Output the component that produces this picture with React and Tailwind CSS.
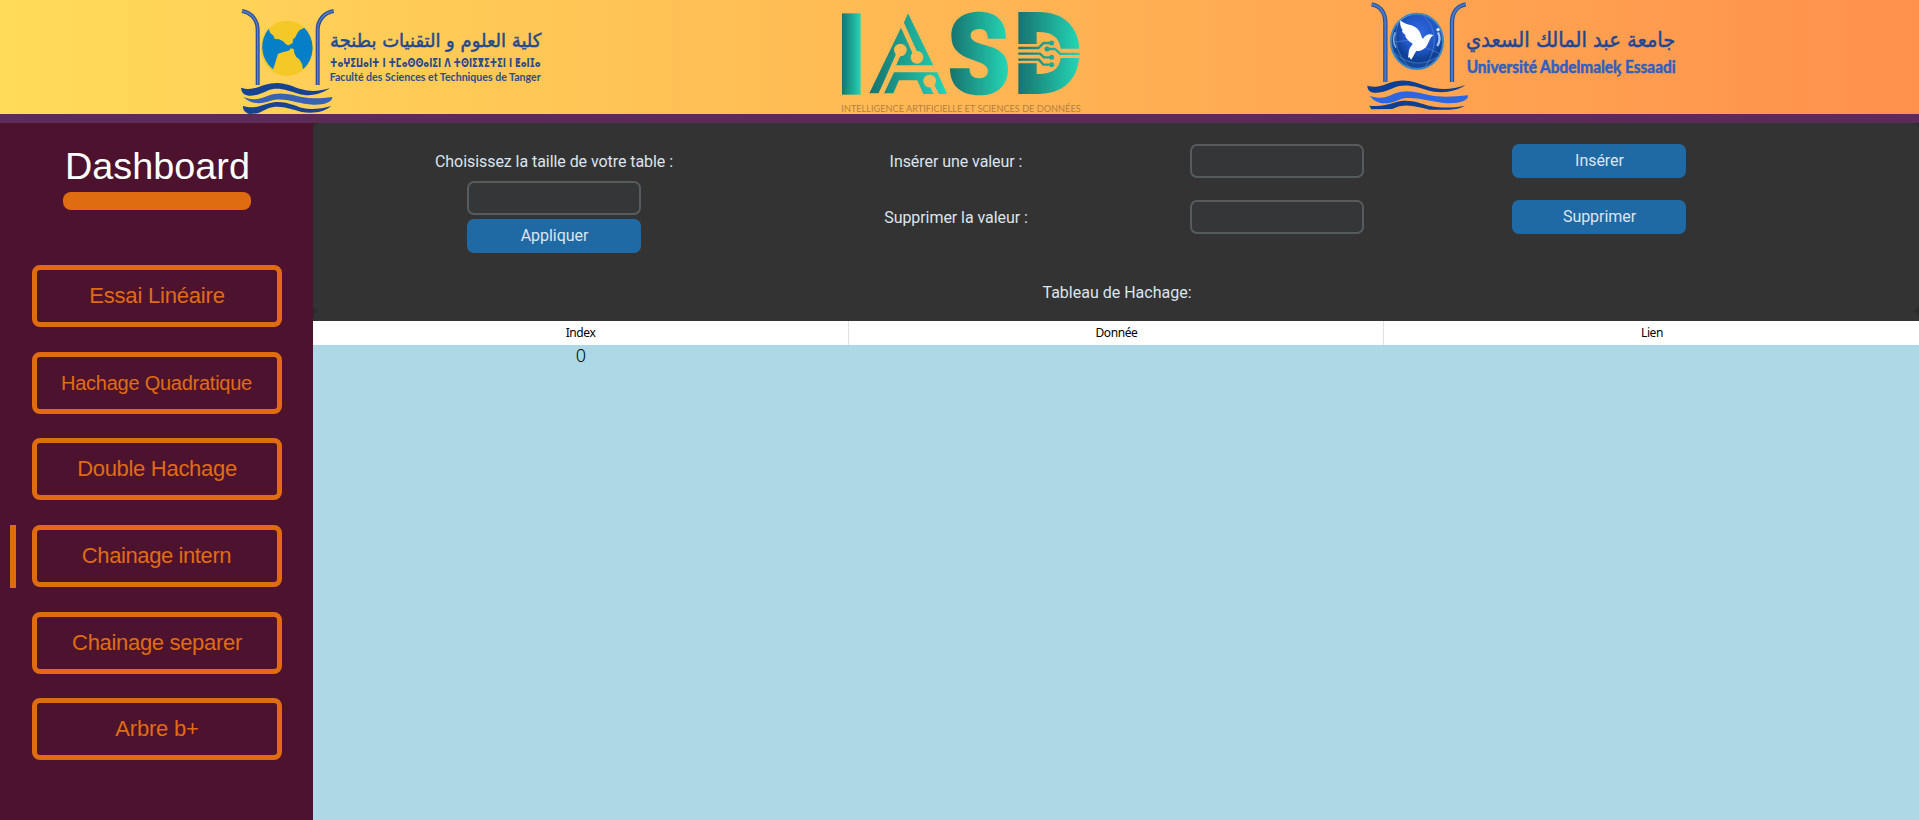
const buttonBase =
  'flex h-[62px] w-[250px] items-center justify-center rounded-[8px] border-[5px] border-[#e06c12] leading-none text-[#e06c12]';

const menu = [
  { label: 'Essai Linéaire', cls: 'text-[22px] tracking-[-0.2px]' },
  { label: 'Hachage Quadratique', cls: 'text-[20px] tracking-[-0.25px] pr-[1px]' },
  { label: 'Double Hachage', cls: 'text-[22px] tracking-[-0.3px]' },
  { label: 'Chainage intern', cls: 'text-[22px] tracking-[-0.4px] pr-[1px]', active: true },
  { label: 'Chainage separer', cls: 'text-[22px] tracking-[-0.32px]' },
  { label: 'Arbre b+', cls: 'text-[22px] tracking-[-0.2px]' },
];

function FacultyLogo() {
  return (
    <svg viewBox="0 0 990 342" className="h-[114px] w-[330px] shrink-0 overflow-visible">
      <g fill="none" stroke="#28509c" strokeWidth="12">
        <path d="M36 33 C66 38 83 62 83 90 V255" />
        <path d="M311 33 C281 38 263 62 263 90 V255" />
      </g>
      <g fill="none" stroke="#5b7fc4" strokeWidth="4">
        <path d="M36 33 C66 38 83 62 83 90 V255" />
        <path d="M311 33 C281 38 263 62 263 90 V255" />
      </g>
      <ellipse cx="171" cy="145" rx="78" ry="83" fill="#f3c827" />
      <path d="M116 86 L120 98 L131 108 L134 117 L147 118 L158 123 L170 134 L176 136 L188 129 L189 118 L195 113 L201 101 L208 91 L223 83 A78 83 0 0 1 219 208 L216 192 L209 179 L199 171 L193 160 L191 147 L183 145 L176 152 L160 156 L144 161 L139 178 L134 194 L129 208 A78 83 0 0 1 116 86Z" fill="#0580c8" />
      <path d="M33 263 C60 272 78 264 100 256 C155 238 180 258 215 268 C245 277 275 272 300 264 C278 281 240 292 205 281 C165 268 140 260 112 272 C82 287 36 300 33 263Z" fill="#164392" />
      <path d="M40 291 C70 302 88 298 112 288 C150 272 188 285 220 292 C248 298 278 294 307 291 C308 308 280 315 250 314 C205 312 170 293 130 300 C92 314 65 314 40 291Z" fill="#3862b4" />
      <path d="M39 318 C70 327 90 318 112 311 C155 297 185 314 218 324 C245 330 275 326 304 318 C285 334 255 342 215 336 C175 326 148 313 112 326 L84 340 L58 342 C45 338 38 330 39 318Z" fill="#164392" />
      <text x="617" y="141" textAnchor="middle" direction="rtl" textLength="634" lengthAdjust="spacingAndGlyphs" fontSize="57" fill="#24498f" stroke="#24498f" strokeWidth="1.5" className="font-['DejaVu_Sans',sans-serif]">كلية العلوم و التقنيات بطنجة</text>
      <text x="300" y="202" textLength="632" lengthAdjust="spacingAndGlyphs" fontSize="38" fill="#24498f" className="font-['DejaVu_Sans',sans-serif] font-bold">ⵜⴰⵖⵉⵡⴰⵏⵜ ⵏ ⵜⵎⴰⵙⵙⴰⵏⵉⵏ ⴷ ⵜⵙⵏⵉⴳⵉⵜⵉⵏ ⵏ ⵟⴰⵏⵊⴰ</text>
      <text x="299" y="243" textLength="633" lengthAdjust="spacingAndGlyphs" fontSize="36" fill="#2a4d8c" className="font-['Lato',sans-serif] font-bold">Faculté des Sciences et Techniques de Tanger</text>
    </svg>
  );
}

function IasdLogo() {
  return (
    <svg viewBox="0 0 840 342" className="h-[114px] w-[280px] shrink-0 overflow-visible">
      <defs>
        <linearGradient id="teal"><stop offset="0" stopColor="#17736f" /><stop offset="1" stopColor="#24d6b5" /></linearGradient>
        <linearGradient id="tealWide" gradientUnits="userSpaceOnUse" x1="150" y1="0" x2="380" y2="0"><stop offset="0" stopColor="#17736f" /><stop offset="1" stopColor="#24d6b5" /></linearGradient>
        <linearGradient id="tealLines" gradientUnits="userSpaceOnUse" x1="595" y1="0" x2="780" y2="0"><stop offset="0" stopColor="#17736f" /><stop offset="1" stopColor="#24d6b5" /></linearGradient>
        <mask id="circuit" maskUnits="userSpaceOnUse" x="140" y="30" width="250" height="260">
          <rect x="140" y="30" width="250" height="260" fill="#fff" />
          <circle cx="241" cy="150" r="19" />
          <circle cx="291" cy="172" r="19" />
          <circle cx="329" cy="243" r="19" />
          <path d="M241 150 L177 296 M244 68 L291 172 M329 243 L353 290" fill="none" stroke="#000" strokeWidth="14" />
        </mask>
      </defs>
      <rect x="66" y="40" width="56" height="244" fill="url(#teal)" />
      <g fill="url(#tealWide)" mask="url(#circuit)">
        <path d="M264 40 L340 196 H217 L176 280 H148 L241 87 L253 65Z" />
        <path d="M222 217 H352 L381 282 H310 L292 241 H237 L220 280 H192Z" />
      </g>
      <path d="M558 116 H504 C503 94 493 87 478 87 C461 87 451 96 452 107 C454 147 564 119 564 206 C564 257 531 286 478 286 C422 286 390 257 390 205 H449 C448 225 458 235 478 235 C493 235 504 226 504 213 C504 170 394 193 394 107 C394 62 426 35 477 35 C530 35 559 65 558 116Z" fill="url(#teal)" />
      <path d="M595 36 H658 C730 36 775 80 778 146 H722 C718 112 696 95 650 96 V132 H595Z M595 190 H650 V222 C693 224 717 209 722 174 H777 C772 240 727 282 655 282 H595Z" fill="url(#tealLines)" />
      <g fill="none" stroke="url(#tealLines)" strokeWidth="7">
        <path d="M595 144 H655 L671 129 H690" />
        <path d="M684 147 H705 L721 161.500 H779" />
        <path d="M595 161 H660 L672 172 H690" />
        <path d="M595 179 H657 L670 194 H690" />
        <circle cx="695" cy="129" r="4" /><circle cx="681" cy="147" r="4" />
        <circle cx="695" cy="172" r="4" /><circle cx="695" cy="194" r="4" />
      </g>
      <text x="64" y="336" textLength="718" lengthAdjust="spacingAndGlyphs" fontSize="30" fill="#9a6a3a" fillOpacity="0.75" className="font-['Lato',sans-serif]">INTELLIGENCE ARTIFICIELLE ET SCIENCES DE DONNÉES</text>
    </svg>
  );
}

function UniversityLogo() {
  return (
    <svg viewBox="0 0 1050 342" className="h-[114px] w-[350px] shrink-0 overflow-visible">
      <defs>
        <radialGradient id="globe" cx="0.55" cy="0.35" r="0.65">
          <stop offset="0" stopColor="#3268e0" /><stop offset="0.5" stopColor="#1f55c4" /><stop offset="0.75" stopColor="#0e3f93" /><stop offset="1" stopColor="#1550a0" />
        </radialGradient>
      </defs>
      <g fill="none" stroke="#24549f" strokeWidth="13">
        <path d="M65 13 C92 18 106 40 106 68 V246" />
        <path d="M347 13 C320 18 306 40 306 68 V246" />
      </g>
      <g fill="none" stroke="#4777cf" strokeWidth="6">
        <path d="M65 13 C92 18 106 40 106 68 V246" />
        <path d="M347 13 C320 18 306 40 306 68 V246" />
      </g>
      <ellipse cx="201" cy="124" rx="78" ry="83" fill="url(#globe)" stroke="#3d86c6" strokeWidth="6" />
      <g fill="none" stroke="#86abea" strokeWidth="2" opacity="0.6">
        <path d="M136 126 L182 120 M134 160 C175 195 220 198 260 172 M150 60 C125 110 140 165 178 202 M220 48 C270 90 255 160 226 199 M225 142 L268 160" />
      </g>
      <path d="M151 61 C165 76 190 73 202 86 C214 99 213 110 219 116 C230 101 241 101 250 106 C241 112 240 119 235 128 C229 144 216 154 199 153 C192 161 190 173 183 179 L178 171 L174 174 L177 150 C181 140 187 134 188 131 C174 124 162 108 167 106 C157 98 154 94 158 91 C152 82 149 73 151 61Z" fill="#fff" />
      <path d="M264 97 C272 112 269 126 262 138" fill="none" stroke="#a9c6ee" strokeWidth="7" />
      <path d="M136 97 C129 112 130 130 138 143" fill="none" stroke="#7fa9de" strokeWidth="5" />
      <circle cx="264" cy="89" r="5" fill="#dfe9f7" />
      <path d="M52 257 C75 264 93 259 115 250 C165 231 198 249 232 259 C270 272 310 268 346 255 C318 276 272 283 230 270 C180 254 155 252 123 267 C92 281 52 287 52 257Z" fill="#0d3f93" />
      <path d="M59 287 C88 298 108 293 128 283 C166 264 207 278 240 286 C280 294 317 289 354 286 C357 304 320 313 282 309 C230 304 187 286 148 299 C110 316 80 314 59 287Z" fill="#2c66e0" />
      <path d="M58 317 C90 321 110 314 132 308 C174 294 206 309 240 318 C277 325 312 324 345 317 C330 325 315 328 298 329 H239 C200 320 164 307 127 327 L64 328Z" fill="#0d3f93" />
      <text x="662" y="140" textAnchor="middle" direction="rtl" textLength="628" lengthAdjust="spacingAndGlyphs" fontSize="64" fill="#1d4696" stroke="#1d4696" strokeWidth="1.5" className="font-['DejaVu_Sans',sans-serif]">جامعة عبد المالك السعدي</text>
      <text x="350" y="220" textLength="627" lengthAdjust="spacingAndGlyphs" fontSize="50" fill="#2f5fc0" stroke="#2f5fc0" strokeWidth="1.5" className="font-['Lato',sans-serif] font-bold">Université Abdelmalek Essaadi</text>
      <path d="M809 216 C813 222 809 227 801 228" fill="none" stroke="#2f5fc0" strokeWidth="5" />
    </svg>
  );
}

function Field() {
  return <input className="h-[34px] w-[174px] rounded-[7px] border-2 border-[#565b5e] bg-[#343638] outline-none" />;
}

function Action({ children }) {
  return (
    <button className="flex h-[34px] w-[174px] items-center justify-center rounded-[7px] bg-[#1f6aa5] pb-[1px] pl-[1px] leading-none tracking-[-0.05px] text-[#dce4ee]">
      {children}
    </button>
  );
}

function Label({ children }) {
  return <p className="flex h-[34px] items-center pt-[2px] leading-none tracking-[-0.06px] whitespace-nowrap">{children}</p>;
}

export default function App() {
  return (
    <div className="flex h-[820px] w-[1919px] flex-col overflow-hidden font-['Liberation_Sans',Arial,sans-serif]">
      <header className="flex h-[123px] shrink-0 border-b-[9px] border-[#5c2c57] bg-linear-to-r from-[#ffdb59] to-[#ff914d] pl-[230px]">
        <FacultyLogo />
        <div className="ml-[260px] flex"><IasdLogo /></div>
        <div className="ml-[250px] flex"><UniversityLogo /></div>
      </header>
      <div className="flex min-h-0 flex-1">
        <aside className="flex w-[313px] shrink-0 flex-col bg-[#4c122e]">
          <h1 className="mt-[21px] w-[315px] text-center text-[37.800px] leading-[44px] text-white">Dashboard</h1>
          <div className="mt-[4px] ml-[63px] h-[18px] w-[188px] rounded-[8px] bg-[#e06c12]" />
          <nav className="mt-[54.900px] flex flex-col gap-[24.700px]">
            {menu.map((m) => (
              <div key={m.label} className="flex h-[62px] items-start pl-[10px]">
                <span className={m.active ? 'h-[63px] w-[6px] bg-[#e06c12]' : 'h-[62px] w-[6px]'} />
                <button className={`${buttonBase} ${m.cls} ml-[16px]`}>{m.label}</button>
              </div>
            ))}
          </nav>
        </aside>
        <main className="flex min-w-0 flex-1 flex-col bg-[#add8e6]">
          <section className="flex h-[198px] flex-col bg-[#2b2b2b] font-['Roboto',sans-serif] text-[16px] text-[#dce4ee]">
            <div className="flex h-[188px] flex-col rounded-[7px] bg-[#333333]">
              <div className="flex h-[130px] pt-[21px]">
                <div className="ml-[122px] flex w-[238px] flex-col items-center">
                  <Label>Choisissez la taille de votre table :</Label>
                  <div className="mt-[3px] flex"><Field /></div>
                  <div className="mt-[4px]"><Action>Appliquer</Action></div>
                </div>
                <div className="ml-[196px] flex w-[174px] flex-col items-center gap-[22px]">
                  <Label>Insérer une valeur :</Label>
                  <Label>Supprimer la valeur :</Label>
                </div>
                <div className="ml-[147px] flex flex-col gap-[22px]"><Field /><Field /></div>
                <div className="ml-[148px] flex flex-col gap-[22px]"><Action>Insérer</Action><Action>Supprimer</Action></div>
              </div>
              <p className="mt-[23px] pl-[2px] text-center leading-[34px]">Tableau de Hachage:</p>
            </div>
            <div className="h-[10px] rounded-t-[7px] bg-[#333333]" />
          </section>
          <div className="grid h-[24px] grid-cols-[536px_535px_535px] bg-white font-['Noto_Sans',sans-serif] text-[12px] leading-[23px] tracking-[-0.4px] text-black">
            <div className="border-r border-[#e2e2e2] text-center">Index</div>
            <div className="border-r border-[#e2e2e2] pl-[1px] text-center">Donnée</div>
            <div className="pl-[1px] text-center">Lien</div>
          </div>
          <div className="grid h-[24px] grid-cols-[536px_535px_535px] font-['Noto_Sans',sans-serif] text-[18px] leading-[21px] text-black">
            <div className="text-center font-light">0</div>
            <div />
            <div />
          </div>
        </main>
      </div>
    </div>
  );
}
